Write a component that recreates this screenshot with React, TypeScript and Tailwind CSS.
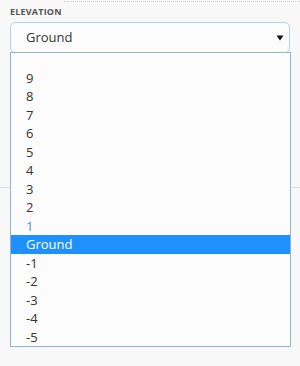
import React from "react";

const Options = ["9", "8", "7", "6", "5", "4", "3", "2", "1", "Ground", "-1", "-2", "-3", "-4", "-5"];

const App: React.FC = () => {
  const selected = "Ground";
  const hovered = "1";

  return (
    <div className="relative w-[300px] h-[366px] overflow-hidden bg-[#f8f8f8] font-['Open_Sans',sans-serif]">
      {/* dotted top edge */}
      <div className="ml-[64px] mt-px border-t border-dotted border-[#cfcfcf]" />

      {/* Label */}
      <div className="px-[10px] pt-[3px] text-[9px] leading-[14px] font-bold tracking-[0.2px] text-[#555]">
        ELEVATION
      </div>

      {/* Select */}
      <div className="mx-[10px] mt-[3px] flex h-[31px] items-center justify-between rounded-[5px] border border-[#b3d2e6] bg-[#fcfcfc] pl-[15px] pr-[5px] text-[13px] text-[#333]">
        <span>Ground</span>
        <svg width="8" height="6" viewBox="0 0 8 6" className="mt-[1px]">
          <path d="M0.5 0.5 L7.5 0.5 L4 5.5 Z" fill="#111" />
        </svg>
      </div>

      {/* Divider behind the open list */}
      <div className="mt-[134px] border-t border-[#dcd9e4]" />

      {/* Open list */}
      <div className="absolute left-[10px] top-[52px] h-[295px] w-[281px] border border-[#8fb6cd] bg-[#fcfcfc] pt-[15.5px]">
        {Options.map((opt) => (
          <div
            key={opt}
            className={
              opt === selected
                ? "h-[18.5px] bg-[#1e90ff] pl-[15px] text-[13px] leading-[18.5px] text-white"
                : opt === hovered
                ? "h-[18.5px] pl-[15px] text-[13px] leading-[18.5px] text-[#3b93d8]"
                : "h-[18.5px] pl-[15px] text-[13px] leading-[18.5px] text-[#333]"
            }
          >
            {opt}
          </div>
        ))}
      </div>
    </div>
  );
};

export default App;
